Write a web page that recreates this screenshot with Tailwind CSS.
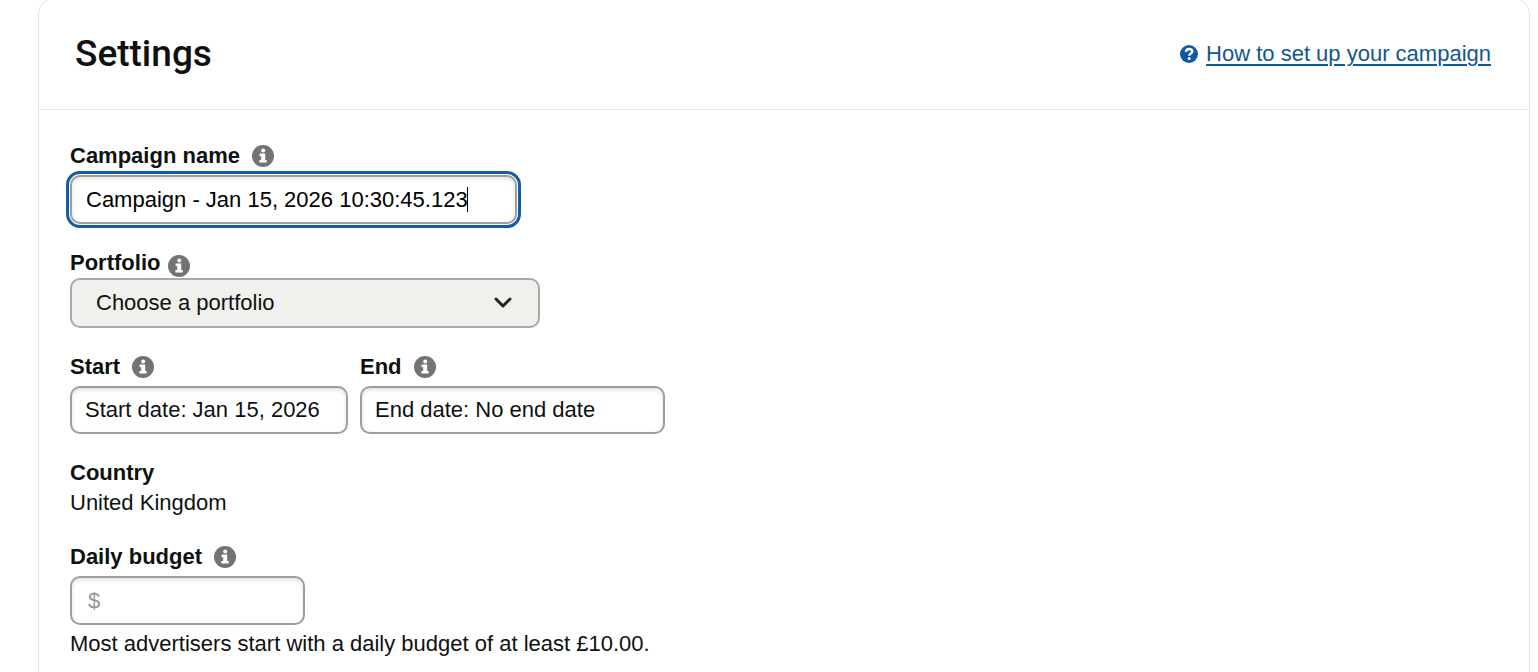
<!DOCTYPE html>
<html lang="en">
<head>
    <meta charset="UTF-8">
    <meta name="viewport" content="width=device-width, initial-scale=1.0">
    <title>Campaign settings</title>
    <script src="https://cdn.jsdelivr.net/npm/@tailwindcss/browser@4"></script>
</head>
<body class="bg-white pl-[38px] pr-2 font-['Liberation_Sans',Arial,sans-serif] text-[22px] leading-[30px] text-[#0f1111]">

    <!-- Shared icons -->
    <svg class="hidden" aria-hidden="true">
        <symbol id="icon-info" viewBox="0 0 22 22">
            <circle cx="11" cy="11" r="11" fill="#737373"/>
            <circle cx="11.2" cy="5.4" r="2" fill="#fff"/>
            <path d="M7.6 8.6h5.600v6.400h1.500v2.600H7.400V15h1.800v-3.800H7.600z" fill="#fff"/>
        </symbol>
        <symbol id="icon-help" viewBox="0 0 18 18">
            <circle cx="9" cy="9" r="9" fill="#0f58a8"/>
            <path d="M5.9 6.900C6.100 4.900 7.400 4 9.100 4c1.900 0 3.100 1 3.100 2.500 0 2.100-2.900 2-2.900 4.200" fill="none" stroke="#fff" stroke-width="2.4"/>
            <circle cx="9.2" cy="13.6" r="1.5" fill="#fff"/>
        </symbol>
    </svg>

    <main class="-mt-0.5 rounded-t-2xl border border-b-0 border-[#e4e6e6] pb-3.5">
        <header class="flex h-[111px] items-center justify-between border-b border-[#e7e9e9] pl-9 pr-[38px]">
            <h1 class="font-[Roboto,sans-serif] text-[37px] font-medium leading-[48px]">Settings</h1>
            <div class="flex items-center gap-2">
                <svg class="size-[18px]" aria-hidden="true"><use href="#icon-help"/></svg>
                <a href="#" class="text-[#12578f] underline decoration-2 underline-offset-3">How to set up your campaign</a>
            </div>
        </header>

        <form class="flex flex-col items-start gap-6 pl-[31px] pt-[31px]">
            <!-- Campaign name -->
            <div>
                <div class="mb-1 flex items-center gap-3">
                    <label for="campaign-name" class="font-bold">Campaign name</label>
                    <svg class="size-[22px]" aria-hidden="true"><use href="#icon-info"/></svg>
                </div>
                <div class="relative">
                    <input id="campaign-name" type="text" value="Campaign - Jan 15, 2026 10:30:45.123" class="block h-[49px] w-[447px] rounded-[10px] border-2 border-[#9c9f9f] px-3.5 text-black caret-transparent shadow-[inset_0_2px_4px_rgba(0,0,0,0.12)] outline-3 outline-offset-1 outline-[#175ba3]">
                    <span class="absolute left-[397px] top-3 h-[25px] w-px bg-black"></span>
                </div>
            </div>

            <!-- Portfolio -->
            <div>
                <div class="flex items-center gap-2">
                    <label for="portfolio" class="font-bold">Portfolio</label>
                    <svg class="mt-1.5 size-[22px]" aria-hidden="true"><use href="#icon-info"/></svg>
                </div>
                <div class="relative">
                    <select id="portfolio" class="block h-[50px] w-[470px] appearance-none rounded-[10px] border-2 border-[#a8aaa8] bg-[#f0f0ed] px-6">
                        <option>Choose a portfolio</option>
                    </select>
                    <svg class="pointer-events-none absolute right-7 top-4 h-4 w-[18px]" viewBox="0 0 18 16" fill="none" stroke="#222" stroke-width="3" stroke-linecap="round" stroke-linejoin="round" aria-hidden="true"><path d="M2 5l7 7 7-7"/></svg>
                </div>
            </div>

            <!-- Dates -->
            <div class="flex gap-3">
                <div>
                    <div class="mb-1 flex items-center gap-3">
                        <label for="start-date" class="font-bold">Start</label>
                        <svg class="size-[22px]" aria-hidden="true"><use href="#icon-info"/></svg>
                    </div>
                    <input id="start-date" type="text" value="Start date: Jan 15, 2026" class="block h-12 w-[278px] rounded-[10px] border-2 border-[#9c9f9f] px-[13px] shadow-[inset_0_2px_4px_rgba(0,0,0,0.12)]">
                </div>
                <div>
                    <div class="mb-1 flex items-center gap-3">
                        <label for="end-date" class="font-bold">End</label>
                        <svg class="size-[22px]" aria-hidden="true"><use href="#icon-info"/></svg>
                    </div>
                    <input id="end-date" type="text" value="End date: No end date" class="block h-12 w-[305px] rounded-[10px] border-2 border-[#9c9f9f] px-[13px] shadow-[inset_0_2px_4px_rgba(0,0,0,0.12)]">
                </div>
            </div>

            <!-- Country -->
            <div>
                <h2 class="font-bold">Country</h2>
                <p>United Kingdom</p>
            </div>

            <!-- Daily budget -->
            <div>
                <div class="mb-1 flex items-center gap-3">
                    <label for="daily-budget" class="font-bold">Daily budget</label>
                    <svg class="size-[22px]" aria-hidden="true"><use href="#icon-info"/></svg>
                </div>
                <input id="daily-budget" type="text" placeholder="$" class="block h-[49px] w-[235px] rounded-[10px] border-2 border-[#9c9f9f] px-4 shadow-[inset_0_2px_4px_rgba(0,0,0,0.12)] placeholder:text-[#949999]">
                <p class="mt-1">Most advertisers start with a daily budget of at least £10.00.</p>
            </div>
        </form>
    </main>
</body>
</html>
